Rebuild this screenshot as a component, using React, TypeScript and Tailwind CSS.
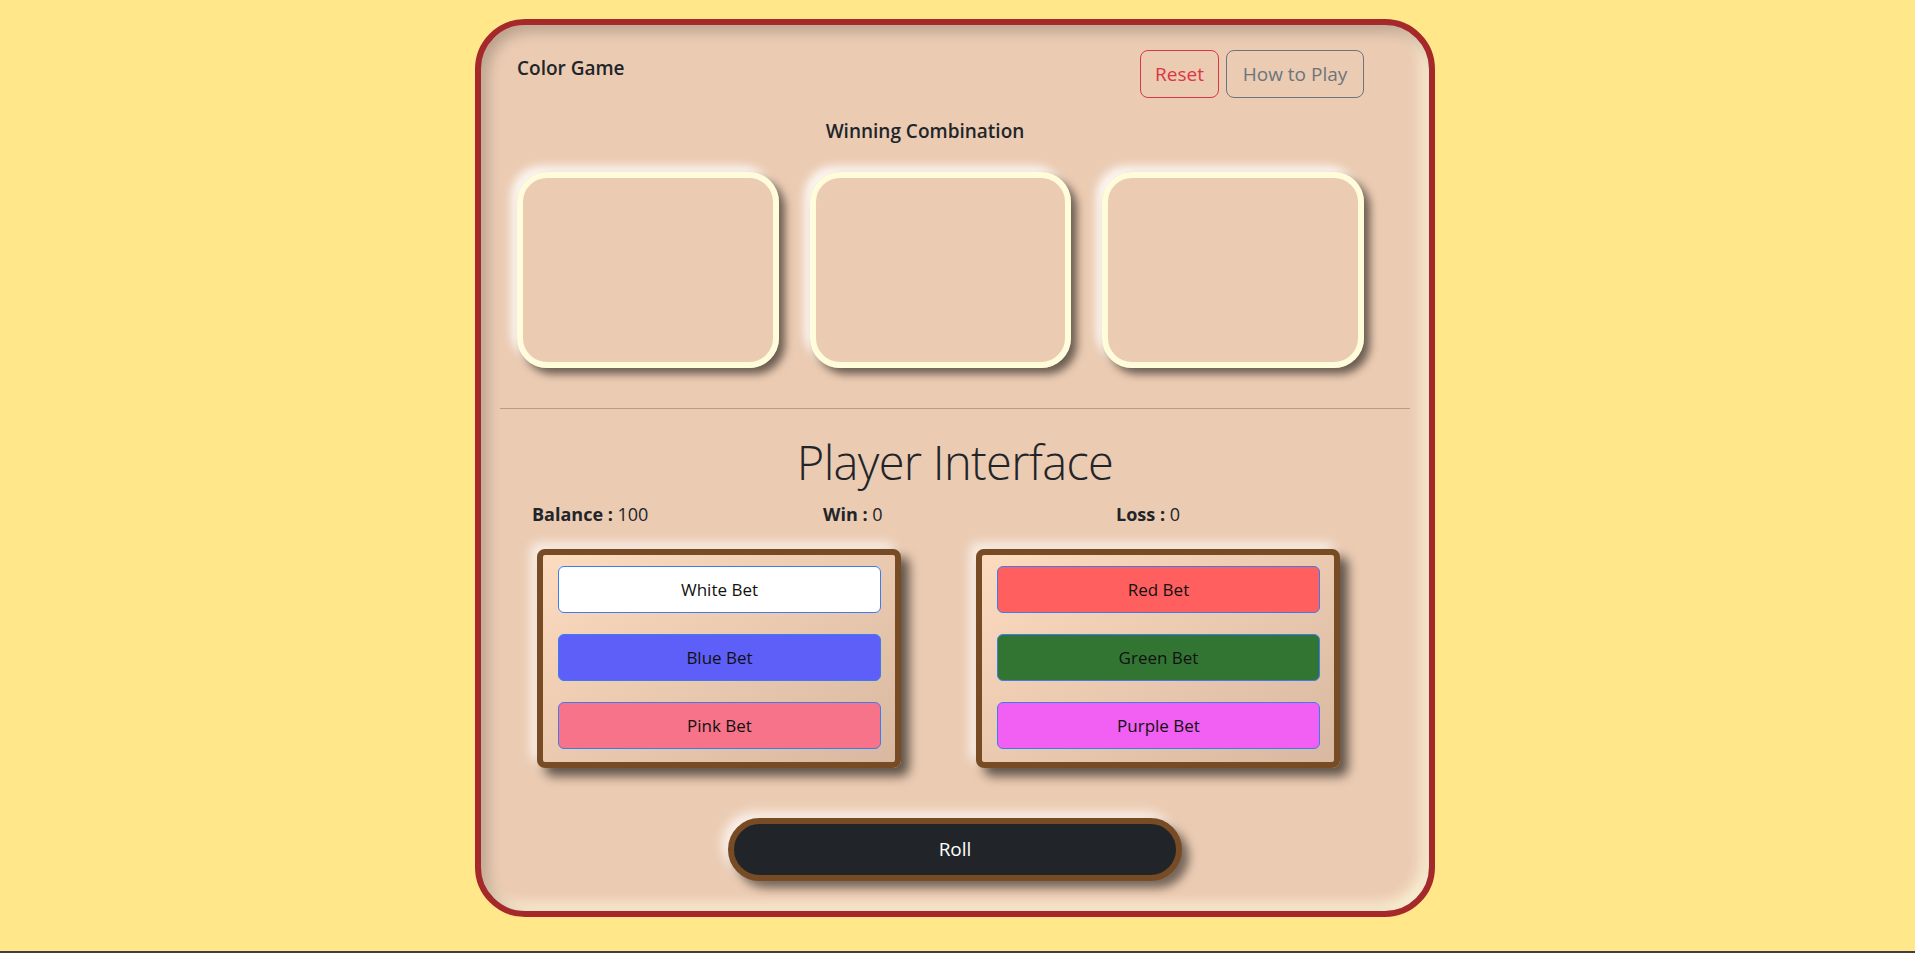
import React from "react";

const leftBets = [
  { label: "White Bet", cls: "bg-white" },
  { label: "Blue Bet", cls: "bg-[#5e5ff8]" },
  { label: "Pink Bet", cls: "bg-[#f67389]" },
];

const rightBets = [
  { label: "Red Bet", cls: "bg-[#ff5f5f]" },
  { label: "Green Bet", cls: "bg-[#327533]" },
  { label: "Purple Bet", cls: "bg-[#f25ff3]" },
];

function BetPanel({ bets }: { bets: { label: string; cls: string }[] }) {
  return (
    <div className="w-[364px] h-[219px] rounded-[8px] border-[6px] border-[#774b24] bg-gradient-to-br from-[#fcdbbf] to-[#d8b8a0] shadow-[8px_8px_11px_rgba(0,0,0,0.6),-6px_-6px_12px_rgba(255,255,255,0.75)] pl-[15px] pr-[14px] pt-[11px] flex flex-col gap-[21px]">
      {bets.map((b) => (
        <button
          key={b.label}
          className={`h-[47px] w-full rounded-[6px] border border-[#3d7cf0] text-[17px] text-[#111] ${b.cls}`}
        >
          {b.label}
        </button>
      ))}
    </div>
  );
}

export default function App() {
  return (
    <div className="min-h-[953px] flex flex-col bg-[#ffe78a] font-['Open_Sans',sans-serif] text-[#212529]">
      <div className="flex-1">
        <div className="ml-[475px] mt-[19px] w-[960px] rounded-[50px] border-[6px] border-[#a5292a] bg-[#ebcbb2] shadow-[inset_6px_6px_14px_rgba(0,0,0,0.22),inset_-7px_-7px_14px_#fbf1d4] pt-[25px] pb-[30px]">
          {/* Top section */}
          <div className="pl-[36px] pr-[65px]">
            <div className="flex items-start justify-between h-[48px]">
              <h5 className="mt-[6px] text-[19px] leading-[24px] font-semibold">Color Game</h5>
              <div className="flex gap-[7px]">
                <button className="w-[79px] h-[48px] rounded-[8px] border border-[#dc3545] text-[#dc3545] text-[19px]">
                  Reset
                </button>
                <button className="w-[138px] h-[48px] rounded-[8px] border border-[#6c757d] text-[#6c757d] text-[19px]">
                  How to Play
                </button>
              </div>
            </div>
            <h5 className="mt-[21px] pr-[31px] text-center text-[19px] leading-[24px] font-semibold">
              Winning Combination
            </h5>
            <div className="mt-[29px] flex gap-[31px]">
              {[0, 1, 2].map((i) => (
                <div
                  key={i}
                  className="w-[262px] h-[196px] rounded-[30px] border-[6px] border-[#fffcdc] shadow-[6px_6px_9px_rgba(0,0,0,0.55),-6px_-6px_10px_rgba(255,255,255,0.85)]"
                />
              ))}
            </div>
          </div>

          <div className="mt-[40px] mx-[19px] h-px bg-[#b39d8c]" />

          {/* Player section */}
          <h1 className="mt-[25px] text-center text-[47px] leading-[57px] font-light tracking-[-0.7px]">
            Player Interface
          </h1>
          <div className="mt-[11px] pl-[51px] grid grid-cols-[291px_293px_1fr] text-[18px] leading-[24px]">
            <div>
              <span className="font-bold">Balance :</span> 100
            </div>
            <div>
              <span className="font-bold">Win :</span> 0
            </div>
            <div>
              <span className="font-bold">Loss :</span> 0
            </div>
          </div>
          <div className="mt-[23px] pl-[56px] flex gap-[75px]">
            <BetPanel bets={leftBets} />
            <BetPanel bets={rightBets} />
          </div>
          <div className="mt-[50px] flex justify-center">
            <button className="w-[454px] h-[63px] rounded-full border-[6px] border-[#774b24] bg-[#212529] text-white text-[19px] shadow-[7px_7px_10px_rgba(0,0,0,0.5),-6px_-6px_12px_rgba(255,255,255,0.75)]">
              Roll
            </button>
          </div>
        </div>
      </div>
      <div className="h-[2px] bg-[#3f3f3f]" />
    </div>
  );
}
